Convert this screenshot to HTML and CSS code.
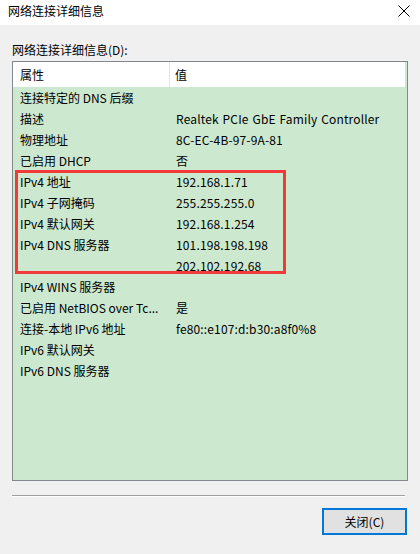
FILE: index.html
```html
<!DOCTYPE html>
<html lang="zh-CN">
<head>
<meta charset="utf-8">
<title>网络连接详细信息</title>
<link rel="stylesheet" href="styles.css">
</head>
<body>
<div class="window">
  <div class="titlebar">
    <span class="title">网络连接详细信息</span>
    <svg class="close" width="12" height="12" viewBox="0 0 12 12"><path d="M0.5 0.5 L11.5 11.5 M11.5 0.5 L0.5 11.5" stroke="#000" stroke-width="1" fill="none"/></svg>
  </div>
  <div class="content">
    <div class="label">网络连接详细信息(D):</div>
    <div class="listbox">
      <div class="header">
        <div class="hcell hprop">属性</div>
        <div class="hcell hval">值</div>
      </div>
      <div class="rows">
        <div class="row"><span class="prop">连接特定的 DNS 后缀</span><span class="val"></span></div>
        <div class="row"><span class="prop">描述</span><span class="val">Realtek PCIe GbE Family Controller</span></div>
        <div class="row"><span class="prop">物理地址</span><span class="val">8C-EC-4B-97-9A-81</span></div>
        <div class="row"><span class="prop">已启用 DHCP</span><span class="val">否</span></div>
        <div class="row"><span class="prop">IPv4 地址</span><span class="val">192.168.1.71</span></div>
        <div class="row"><span class="prop">IPv4 子网掩码</span><span class="val">255.255.255.0</span></div>
        <div class="row"><span class="prop">IPv4 默认网关</span><span class="val">192.168.1.254</span></div>
        <div class="row"><span class="prop">IPv4 DNS 服务器</span><span class="val">101.198.198.198</span></div>
        <div class="row"><span class="prop"></span><span class="val">202.102.192.68</span></div>
        <div class="row"><span class="prop">IPv4 WINS 服务器</span><span class="val"></span></div>
        <div class="row"><span class="prop">已启用 NetBIOS over Tc...</span><span class="val">是</span></div>
        <div class="row"><span class="prop">连接-本地 IPv6 地址</span><span class="val">fe80::e107:d:b30:a8f0%8</span></div>
        <div class="row"><span class="prop">IPv6 默认网关</span><span class="val"></span></div>
        <div class="row"><span class="prop">IPv6 DNS 服务器</span><span class="val"></span></div>
      </div>
      <div class="highlight"></div>
    </div>
    <div class="separator"></div>
    <div class="buttons">
      <button class="btn">关闭(C)</button>
    </div>
  </div>
</div>
</body>
</html>
```
FILE: styles.css
```css
* { box-sizing: border-box; }
html, body {
  margin: 0;
  padding: 0;
  width: 420px;
  height: 554px;
  overflow: hidden;
  background: #f0f0f0;
  font-family: "Noto Sans CJK SC", "Noto Sans", sans-serif;
  font-size: 12px;
  color: #000;
}
.window {
  width: 420px;
  height: 554px;
  display: flex;
  flex-direction: column;
}
.titlebar {
  height: 25px;
  background: #fff;
  display: flex;
  align-items: center;
  justify-content: space-between;
  padding: 0 10px 3px 8px;
}
.title { font-size: 12px; line-height: 16px; }
.close { display: block; margin-top: -1px; }
.content {
  padding: 0 12px 0 12px;
  display: flex;
  flex-direction: column;
}
.label {
  margin-top: 16px;
  line-height: 18px;
  height: 20px;
}
.listbox {
  position: relative;
  width: 396px;
  height: 420px;
  border: 1px solid #828790;
  background: #cce8cf;
}
.header {
  display: flex;
  height: 25px;
  width: 392px;
  background: #fff;
}
.hcell {
  display: flex;
  align-items: center;
  line-height: 16px;
}
.hprop {
  width: 157px;
  padding-left: 7px;
  border-right: 1px solid #e5e5e5;
}
.hval { padding-left: 5px; }
.rows { display: flex; flex-direction: column; }
.row {
  display: flex;
  height: 21px;
  align-items: center;
  padding-left: 7px;
  line-height: 16px;
  white-space: nowrap;
}
.prop { width: 156px; }
.val { flex: 1; letter-spacing: 0.15px; word-spacing: 1px; }
.highlight {
  position: absolute;
  left: 2px;
  top: 108px;
  width: 271px;
  height: 104px;
  border: 3px solid #f23a3a;
  pointer-events: none;
}
.separator {
  margin-top: 14px;
  width: 393px;
  height: 2px;
  border-top: 1px solid #a0a0a0;
  border-bottom: 1px solid #fff;
}
.buttons {
  display: flex;
  justify-content: flex-end;
  margin-top: 11px;
}
.btn {
  width: 85px;
  height: 27px;
  border: 2px solid #0078d7;
  background: #e1e1e1;
  font-family: "Noto Sans CJK SC", "Noto Sans", sans-serif;
  font-size: 12px;
  color: #000;
  padding: 0;
  margin-right: 1px;
}
```
